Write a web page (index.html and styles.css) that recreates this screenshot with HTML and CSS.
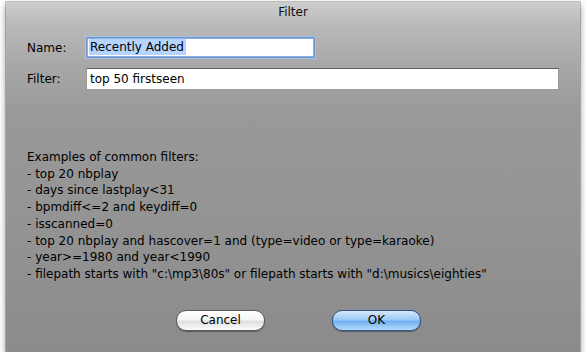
FILE: index.html
```html
<!DOCTYPE html>
<html lang="en">
  <head>
    <meta charset="UTF-8" />
    <title>Filter</title>
    <link rel="stylesheet" href="styles.css">
  </head>
  <body>
    <div class="window">
      <div class="titlebar">Filter</div>

      <div class="content">
        <div class="form">
          <label class="field-label" for="nameInput">Name:</label>
          <div class="field name-field focused">
            <span class="selected">Recently Added</span>
          </div>

          <label class="field-label" for="filterInput">Filter:</label>
          <div class="field filter-field">top 50 firstseen</div>
        </div>

        <div class="examples">
          <div>Examples of common filters:</div>
          <div>- top 20 nbplay</div>
          <div>- days since lastplay&lt;31</div>
          <div>- bpmdiff&lt;=2 and keydiff=0</div>
          <div>- isscanned=0</div>
          <div>- top 20 nbplay and hascover=1 and (type=video or type=karaoke)</div>
          <div>- year&gt;=1980 and year&lt;1990</div>
          <div>- filepath starts with "c:\mp3\80s" or filepath starts with "d:\musics\eighties"</div>
        </div>

        <div class="buttons">
          <button class="btn">Cancel</button>
          <button class="btn btn-default">OK</button>
        </div>
      </div>
    </div>
  </body>
</html>
```

FILE: styles.css
```css
body {
  margin: 0;
  background-color: #fff;
  font-family: "DejaVu Sans", Verdana, sans-serif;
  font-size: 12px;
  color: #000;
}
.window {
  margin: 2px 6px 0 6px;
  width: 574px;
  height: 350px;
  background: linear-gradient(#cdcdcd 0, #bababa 22px, #a9a9a9 60px, #999 110px, #959595 200px, #8b8b8b 100%);
  box-shadow: 0 0 0 1px rgba(0, 0, 0, 0.2), 0 3px 7px rgba(0, 0, 0, 0.45);
}
.titlebar {
  height: 22px;
  line-height: 20px;
  text-align: center;
  font-size: 12px;
  color: #111;
}
.content {
  padding: 13px 0 0 21px;
}
.form {
  display: grid;
  grid-template-columns: 59px auto;
  row-gap: 10px;
  align-items: center;
}
.field-label {
  font-size: 12px;
}
.field {
  box-sizing: border-box;
  background-color: #fff;
  border: 1px solid #9a9a9a;
  border-top-color: #5f5f5f;
  padding: 0 0 0 3px;
  font-size: 12px;
  line-height: 18px;
}
.name-field {
  width: 229px;
  height: 21px;
  line-height: 17px;
  border: 1px solid #6f95c9;
  box-shadow: 0 0 0 1px #a6c3ea, inset 0 0 0 1px #8eb1e2;
  padding: 1px 0 0 2px;
}
.selected {
  background-color: #b5d4fe;
  padding: 1px 2px 1px 1px;
}
.filter-field {
  width: 473px;
  height: 22px;
  line-height: 20px;
}
.examples {
  margin-top: 59px;
  line-height: 16.7px;
}
.buttons {
  display: flex;
  gap: 67px;
  margin: 27px 0 0 149px;
}
.btn {
  width: 89px;
  height: 21px;
  padding: 0;
  border: 1px solid #5a5a5a;
  border-radius: 10px;
  font-family: "DejaVu Sans", Verdana, sans-serif;
  font-size: 12px;
  color: #000;
  background: linear-gradient(#ffffff 0, #f6f6f6 45%, #e0e0e0 55%, #fbfbfb 100%);
  box-shadow: 0 1px 1px rgba(0, 0, 0, 0.35);
}
.btn-default {
  border-color: #33518a;
  background: linear-gradient(#d6e8fb 0, #9ecaf6 45%, #6fb1ef 55%, #b6dcfb 100%);
}
```
